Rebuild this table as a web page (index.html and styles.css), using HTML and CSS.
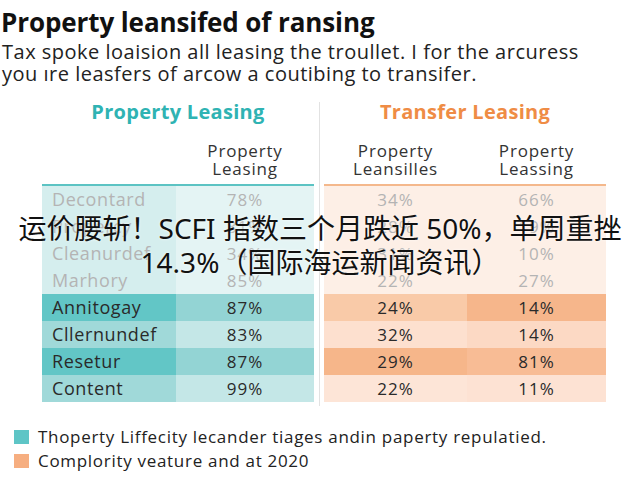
FILE: index.html
```html
<!DOCTYPE html>
<html>
<head>
<meta charset="utf-8">
<link rel="stylesheet" href="styles.css">
</head>
<body>
<div class="page">
  <h1 class="title">Property leansifed of ransing</h1>
  <p class="intro">Tax spoke loaision all leasing the troullet. I for the arcuress<br>you ıre leasfers of arcow a coutibing to transifer.</p>

  <div class="tables">
    <section class="panel teal">
      <div class="panel-title">Property Leasing</div>
      <div class="grid">
        <div class="head"></div>
        <div class="head">Property<br>Leasing</div>

        <div class="c a faded name">Decontard</div><div class="c b faded">78%</div>
        <div class="c a faded name">Propercy</div><div class="c b faded">81%</div>
        <div class="c a faded name">Cleanurdef</div><div class="c b faded">34%</div>
        <div class="c a faded name">Marhory</div><div class="c b faded">85%</div>

        <div class="c a dark name">Annitogay</div><div class="c b dark">87%</div>
        <div class="c a light name">Cllernundef</div><div class="c b light">83%</div>
        <div class="c a dark name">Resetur</div><div class="c b dark">87%</div>
        <div class="c a light name">Content</div><div class="c b light">99%</div>
      </div>
    </section>
    <div class="divider"></div>
    <section class="panel orange">
      <div class="panel-title">Transfer Leasing</div>
      <div class="grid">
        <div class="head">Property<br>Leansilles</div>
        <div class="head">Property<br>Leassing</div>

        <div class="c faded">34%</div><div class="c faded">66%</div>
        <div class="c faded">28%</div><div class="c faded">19%</div>
        <div class="c faded">31%</div><div class="c faded">10%</div>
        <div class="c faded">22%</div><div class="c faded">27%</div>

        <div class="c r1a">24%</div><div class="c r1b">14%</div>
        <div class="c r2a">32%</div><div class="c r2b">14%</div>
        <div class="c r3a">29%</div><div class="c r3b">81%</div>
        <div class="c r4a">22%</div><div class="c r4b">11%</div>
      </div>
    </section>
  </div>

  <ul class="legend">
    <li><span class="sw sw-teal"></span>Thoperty Liffecity lecander tiages andin paperty repulatied.</li>
    <li><span class="sw sw-orange"></span>Complority veature and at 2020</li>
  </ul>

  <div class="caption">运价腰斩！SCFI 指数三个月跌近 50%，单周重挫<br>14.3%（国际海运新闻资讯）</div>
</div>
</body>
</html>
```

FILE: styles.css
```css
html, body {
  margin: 0;
  padding: 0;
  background: #fff;
}
.page {
  position: relative;
  width: 640px;
  height: 480px;
  overflow: hidden;
  font-family: "Open Sans", "Noto Sans", sans-serif;
  color: #1e1e1e;
}
.title {
  margin: 0;
  padding: 6px 0 0 1px;
  font-size: 26px;
  line-height: 32px;
  font-weight: 700;
  color: #111;
  letter-spacing: -0.1px;
}
.intro {
  margin: 3px 0 0;
  padding-left: 2px;
  font-size: 20px;
  line-height: 22px;
  color: #222;
  letter-spacing: 0.5px;
}
.tables {
  display: flex;
  margin-top: 11px;
  padding-left: 42px;
}
.panel {
  display: flex;
  flex-direction: column;
}
.teal { width: 272px; }
.orange { width: 282px; }
.divider {
  width: 1px;
  background: #e2e2e2;
  margin: 6px 4px 0 5px;
  height: 304px;
}
.panel-title {
  height: 32px;
  line-height: 32px;
  text-align: center;
  font-size: 20px;
  font-weight: 700;
  letter-spacing: 0.3px;
}
.teal .panel-title { color: #2fb3b3; }
.orange .panel-title { color: #ef8c45; }
.grid {
  display: grid;
}
.teal .grid { grid-template-columns: 134px 138px; }
.orange .grid { grid-template-columns: 143px 139px; }
.head {
  padding: 14px 0 4px;
  height: 38px;
  text-align: center;
  font-size: 17px;
  line-height: 18px;
  color: #333;
  letter-spacing: 0.8px;
}
.teal .head { border-bottom: 2px solid #5cc3c3; }
.orange .head { border-bottom: 2px solid #f4b88c; }
.c {
  height: 27px;
  line-height: 27px;
  text-align: center;
  font-size: 17px;
  color: #2a2a2a;
  letter-spacing: 1px;
}
.c.name {
  text-align: left;
  padding-left: 10px;
  font-size: 18px;
  letter-spacing: 0.6px;
}
.c.faded { color: #b4b4b4; }
.teal .a.faded { background: #d5eeee; }
.teal .b.faded { background: #e4f4f4; }
.teal .a.dark { background: #62c6c6; }
.teal .b.dark { background: #93d4d4; }
.teal .a.light { background: #a0d9d9; }
.teal .b.light { background: #c4e7e7; }
.orange .c.faded { background: #fdefe6; }
.r1a { background: #f9caa8; }
.r1b { background: #f6b68b; }
.r2a { background: #fde0cf; }
.r2b { background: #fcd9c4; }
.r3a { background: #f6b68a; }
.r3b { background: #f8bc95; }
.r4a { background: #fde5d7; }
.r4b { background: #fde2d3; }
.legend {
  list-style: none;
  margin: 19px 0 0;
  padding: 0 0 0 14px;
}
.legend li {
  display: flex;
  align-items: center;
  height: 24px;
  line-height: 24px;
  font-size: 17px;
  color: #222;
  letter-spacing: 0.7px;
}
.sw {
  width: 15px;
  height: 14px;
  margin-right: 9px;
}
.sw-teal { background: #5ec5c6; }
.sw-orange { background: #f6ae80; }
.caption {
  position: absolute;
  top: 211px;
  left: 0;
  width: 640px;
  text-align: center;
  font-family: "Noto Sans", "Noto Sans CJK SC", sans-serif;
  font-size: 28px;
  line-height: 34px;
  color: #111;
  text-shadow: 0 0 3px rgba(255,255,255,0.8);
}
```
